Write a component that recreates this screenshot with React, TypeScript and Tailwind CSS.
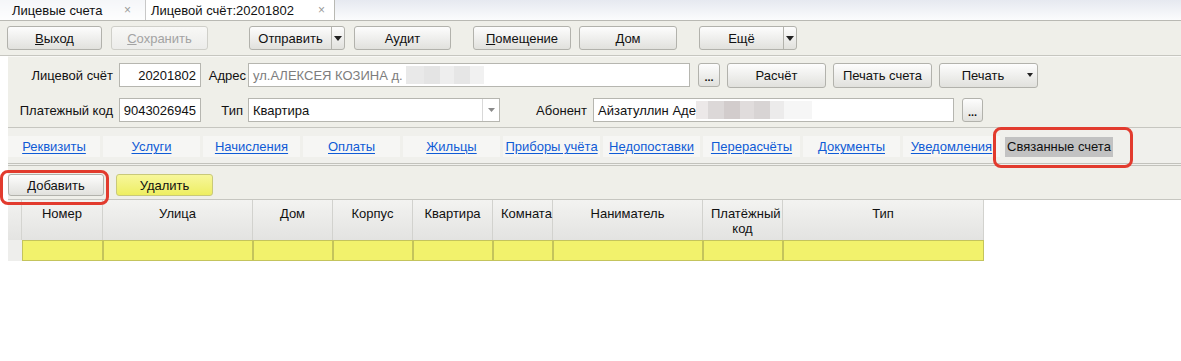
import React from 'react';

const font = "font-['Liberation_Sans','Arial',sans-serif]";

type BtnProps = {
  children: React.ReactNode;
  className?: string;
  disabled?: boolean;
  yellow?: boolean;
};

const Btn: React.FC<BtnProps> = ({ children, className = '', disabled, yellow }) => (
  <div
    className={`flex items-center justify-center rounded-[3px] border shrink-0 ${
      yellow
        ? 'border-[#c9c97a] bg-linear-to-b from-[#f7f79a] to-[#eeee60]'
        : disabled
        ? 'border-[#cfcfc9] bg-linear-to-b from-[#f8f8f6] to-[#ececea] text-[#a3a3a3]'
        : 'border-[#b2b2ac] bg-linear-to-b from-[#fdfdfd] to-[#e1e1dd]'
    } ${className}`}
  >
    {children}
  </div>
);

const Caret = () => (
  <svg width="8" height="5" viewBox="0 0 8 5" className="block">
    <path d="M0 0 L8 0 L4 5 Z" fill="#222" />
  </svg>
);

const SplitBtn: React.FC<{ label: string; className?: string }> = ({ label, className = '' }) => (
  <Btn className={`!justify-start ${className}`}>
    <span className="flex-1 text-center">{label}</span>
    <span className="w-[13px] h-full flex items-center justify-center border-l border-[#b2b2ac]">
      <Caret />
    </span>
  </Btn>
);

const Input: React.FC<{ children?: React.ReactNode; className?: string }> = ({ children, className = '' }) => (
  <div className={`h-[24px] bg-white border border-[#b6b6b0] flex items-center px-[4px] shrink-0 overflow-hidden whitespace-nowrap ${className}`}>
    {children}
  </div>
);

const Blur: React.FC<{ className: string }> = ({ className }) => <span className={`inline-block h-[18px] ${className}`} />;

const links = ['Реквизиты', 'Услуги', 'Начисления', 'Оплаты', 'Жильцы', 'Приборы учёта', 'Недопоставки', 'Перерасчёты', 'Документы', 'Уведомления'];

const cols = [
  { name: 'Номер', w: 'w-[81px]' },
  { name: 'Улица', w: 'w-[150px]' },
  { name: 'Дом', w: 'w-[80px]' },
  { name: 'Корпус', w: 'w-[80px]' },
  { name: 'Квартира', w: 'w-[80px]' },
  { name: 'Комната', w: 'w-[60px]' },
  { name: 'Наниматель', w: 'w-[150px]' },
  { name: 'Платёжный код', w: 'w-[80px]' },
  { name: 'Тип', w: 'w-[201px]' },
];

export default function App() {
  return (
    <div className={`relative w-[1181px] h-[361px] overflow-hidden bg-white text-[13px] leading-[15px] text-[#111] ${font}`}>
      {/* Tabs */}
      <div className="h-[21px] flex bg-linear-to-b from-[#e6e9f0] to-[#fbfcfd] border-b border-[#b9b9b3]">
        <div className="w-[146px] flex items-center pl-[12px] pr-[14px] bg-white/60 border-r border-[#c8c8c8]">
          <span>Лицевые счета</span>
          <span className="ml-auto text-[#9a9a9a] text-[12px]">×</span>
        </div>
        <div className="w-[189px] flex items-center pl-[5px] pr-[9px] bg-white border-r border-[#b9b9b3]">
          <span>Лицевой счёт:20201802</span>
          <span className="ml-auto text-[#9a9a9a] text-[12px]">×</span>
        </div>
      </div>

      {/* Toolbar */}
      <div className="h-[35px] flex items-center pl-[7px] bg-[#efefe9] border-b border-[#c6c6c0]">
        <Btn className="w-[95px] h-[24px]">
          <span><u>В</u>ыход</span>
        </Btn>
        <Btn disabled className="ml-[9px] w-[97px] h-[24px]">
          <span><u>С</u>охранить</span>
        </Btn>
        <SplitBtn label="Отправить" className="ml-[41px] w-[96px] h-[24px]" />
        <Btn className="ml-[9px] w-[97px] h-[24px]">Аудит</Btn>
        <Btn className="ml-[22px] w-[98px] h-[24px]">
          <span><u>П</u>омещение</span>
        </Btn>
        <Btn className="ml-[8px] w-[98px] h-[24px]">
          <span><u>Д</u>ом</span>
        </Btn>
        <SplitBtn label="Ещё" className="ml-[22px] w-[98px] h-[24px]" />
      </div>

      {/* Panel */}
      <div className="pl-[8px]">
        <div className="bg-[#efefe9] border-t border-[#f8f8f5]">
          {/* Form */}
          <div className="pt-[6px] pb-[5px] border-b border-[#c6c6c0]">
            <div className="flex items-center h-[24px]">
              <div className="w-[105px] text-right shrink-0">Лицевой счёт</div>
              <Input className="ml-[6px] w-[82px] justify-end">20201802</Input>
              <div className="w-[47px] text-right pr-[2px] shrink-0">Адрес</div>
              <Input className="w-[442px] text-[#7d7d7d]">
                <span>ул.АЛЕКСЕЯ КОЗИНА д.</span>
                <Blur className="ml-[3px] w-[18px] bg-[#e9e9e9]" />
                <Blur className="w-[16px] bg-[#e4e4e4]" />
                <Blur className="w-[14px] bg-[#eeeeee]" />
                <Blur className="w-[16px] bg-[#e6e6e6]" />
                <Blur className="w-[14px] bg-[#f1f1f1]" />
              </Input>
              <Btn className="ml-[8px] w-[22px] h-[24px]">
                <span className="font-bold text-[11px] leading-none pt-[4px]">...</span>
              </Btn>
              <Btn className="ml-[7px] w-[99px] h-[25px]">Расчёт</Btn>
              <Btn className="ml-[7px] w-[99px] h-[25px]">Печать счета</Btn>
              <Btn className="ml-[7px] w-[99px] h-[25px] !justify-start">
                <span className="flex-1 text-center pl-[3px]">Печать</span>
                <span className="w-[14px] flex justify-center">
                  <svg width="6" height="4" viewBox="0 0 6 4"><path d="M0 0 L6 0 L3 4 Z" fill="#222" /></svg>
                </span>
              </Btn>
            </div>
            <div className="flex items-center h-[24px] mt-[11px]">
              <div className="w-[105px] text-right shrink-0">Платежный код</div>
              <Input className="ml-[6px] w-[82px] justify-end">9043026945</Input>
              <div className="w-[47px] text-right pr-[5px] shrink-0">Тип</div>
              <Input className="w-[252px] !pr-0">
                <span>Квартира</span>
                <span className="ml-auto w-[17px] h-full flex items-center justify-center border-l border-[#d8d8d8]">
                  <svg width="7" height="4" viewBox="0 0 7 4"><path d="M0 0 L7 0 L3.5 4 Z" fill="#8a8a8a" /></svg>
                </span>
              </Input>
              <div className="w-[93px] text-right pr-[6px] shrink-0">Абонент</div>
              <Input className="w-[361px]">
                <span>Айзатуллин Аде</span>
                <Blur className="w-[12px] bg-[#ece8e8]" />
                <Blur className="w-[16px] bg-[#dcd8d8]" />
                <Blur className="w-[16px] bg-[#d2cccc]" />
                <Blur className="w-[14px] bg-[#e0dcdc]" />
                <Blur className="w-[16px] bg-[#d8d4d4]" />
                <Blur className="w-[14px] bg-[#ecebeb]" />
                <Blur className="w-[28px] bg-[#f6f6f6]" />
              </Input>
              <Btn className="ml-[8px] w-[21px] h-[24px]">
                <span className="font-bold text-[11px] leading-none pt-[4px]">...</span>
              </Btn>
            </div>
          </div>

          {/* Section links */}
          <div className="h-[38px] flex items-center pt-[2px] bg-[#f0f0ec] border-b-[3px] border-double border-[#c2c2bc]">
            {links.map((l, i) => (
              <div
                key={l}
                className={`h-[21px] flex items-center justify-center bg-[#f6f6f4] ${i === 0 ? 'w-[92px]' : 'w-[97px] ml-[3px]'}`}
              >
                <span className="text-[#0f5bd6] underline underline-offset-2">{l}</span>
              </div>
            ))}
            <div className="ml-[5px] h-[20px] flex items-center px-[2px] bg-[#c2c2c2]">Связанные счета</div>
          </div>

          {/* Actions */}
          <div className="h-[34px] flex items-start pt-[8px] border-b border-[#c6c6c0]">
            <Btn className="w-[96px] h-[22px]">Добавить</Btn>
            <Btn yellow className="ml-[12px] w-[97px] h-[22px]">Удалить</Btn>
          </div>
        </div>

        {/* Table */}
        <div className="flex">
          <div className="w-[14px] flex flex-col shrink-0">
            <div className="h-[40px] bg-linear-to-b from-[#f2f2f0] to-[#e4e4e2] border-r border-[#d4d4d0]" />
            <div className="h-[21px] bg-[#eeeeec]" />
          </div>
          <div>
            <div className="flex h-[40px]">
              {cols.map((c) => (
                <div
                  key={c.name}
                  className={`${c.w} shrink-0 text-center pt-[6px] px-[8px] bg-linear-to-b from-[#f3f3f1] to-[#e3e3e1] border-r border-[#d2d2ce]`}
                >
                  {c.name}
                </div>
              ))}
            </div>
            <div className="flex h-[21px]">
              {cols.map((c) => (
                <div key={c.name} className={`${c.w} shrink-0 bg-[#f2f26c] border border-[#c4c45c]`} />
              ))}
            </div>
          </div>
        </div>
      </div>

      {/* Highlights */}
      <div className="absolute left-[993px] top-[127px] w-[140px] h-[41px] border-[3px] border-[#e23b2e] rounded-[8px]" />
      <div className="absolute left-[0px] top-[170px] w-[109px] h-[35px] border-[3px] border-[#e23b2e] rounded-[8px]" />
    </div>
  );
}
